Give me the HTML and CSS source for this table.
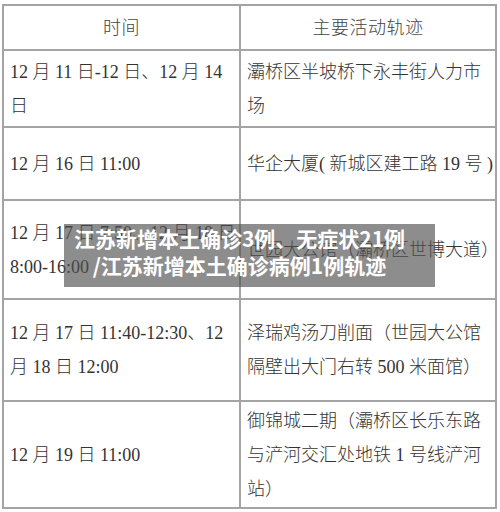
FILE: index.html
```html
<!DOCTYPE html>
<html lang="zh-CN">
<head>
<meta charset="utf-8">
<title>江苏新增本土确诊3例、无症状21例</title>
<link rel="stylesheet" href="styles.css">
</head>
<body>
<div class="page">
  <div class="grid">
    <div class="cell head h0">时间</div>
    <div class="cell head h0">主要活动轨迹</div>

    <div class="cell r1">12 月 11 日-12 日、12 月 14<br>日</div>
    <div class="cell r1">灞桥区半坡桥下永丰街人力市<br>场</div>

    <div class="cell r2">12 月 16 日 11:00</div>
    <div class="cell r2">华企大厦( 新城区建工路 19 号 )</div>

    <div class="cell r3">12 月 17 日 7:50、12 月 18 日<br>8:00-16:00</div>
    <div class="cell r3">世园大公馆（灞桥区世博大道）</div>

    <div class="cell r4">12 月 17 日 11:40-12:30、12<br>月 18 日 12:00</div>
    <div class="cell r4">泽瑞鸡汤刀削面（世园大公馆<br>隔壁出大门右转 500 米面馆）</div>

    <div class="cell r5">12 月 19 日 11:00</div>
    <div class="cell r5">御锦城二期（灞桥区长乐东路<br>与浐河交汇处地铁 1 号线浐河<br>站）</div>
  </div>
  <div class="banner">
    <span class="line">江苏新增本土确诊3例、无症状21例</span>
    <span class="line">/江苏新增本土确诊病例1例轨迹</span>
  </div>
</div>
</body>
</html>
```

FILE: styles.css
```css
html, body {
  margin: 0;
  padding: 0;
  background: #ffffff;
}

.page {
  position: relative;
  width: 500px;
  height: 512px;
  padding: 4px 0 0 2px;
  box-sizing: border-box;
  overflow: hidden;
}

.grid {
  display: grid;
  grid-template-columns: 237px 256px;
  grid-template-rows: 45px 77px 73px 99px 102px 107px;
  border-top: 2px solid #a4a4a4;
  border-left: 2px solid #a4a4a4;
  width: 493px;
  font-family: "Liberation Serif", "Noto Sans CJK SC", serif;
  font-size: 18px;
  font-weight: 300;
  color: #333333;
}

.cell {
  border-right: 2px solid #a4a4a4;
  border-bottom: 2px solid #a4a4a4;
  display: flex;
  flex-direction: column;
  justify-content: center;
  padding: 0 4px 0 6px;
  line-height: 34px;
  white-space: nowrap;
}

.head {
  align-items: center;
  padding: 0;
  color: #444444;
  letter-spacing: 0.5px;
}

.banner {
  position: absolute;
  left: 64px;
  top: 224px;
  width: 371px;
  height: 63px;
  box-sizing: border-box;
  padding: 1px 20px 0 0;
  background: rgba(80, 80, 80, 0.65);
  display: flex;
  flex-direction: column;
  align-items: center;
  font-family: "Noto Sans CJK SC", sans-serif;
  font-weight: 700;
  font-size: 21px;
  line-height: 27px;
  color: #ffffff;
}

.banner .line {
  display: block;
  white-space: nowrap;
}
```
